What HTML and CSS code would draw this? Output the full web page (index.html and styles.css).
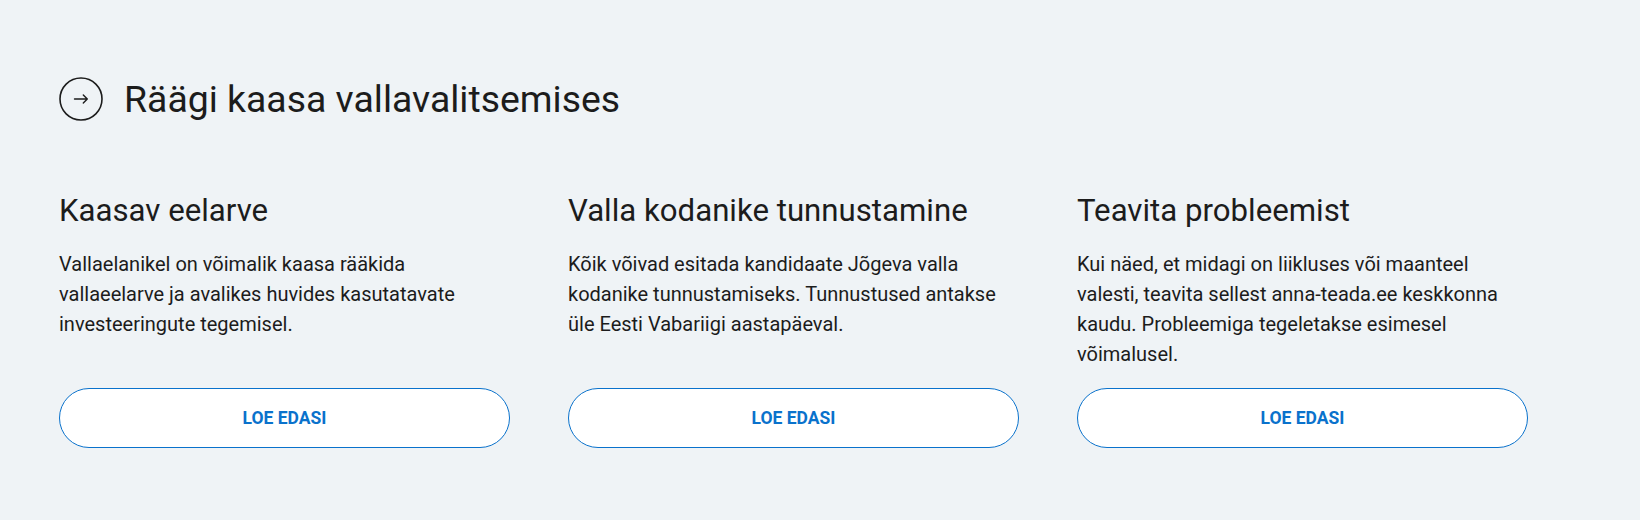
FILE: index.html
```html
<!DOCTYPE html>
<html lang="et">
<head>
<meta charset="utf-8">
<title>Räägi kaasa vallavalitsemises</title>
<link rel="stylesheet" href="styles.css">
</head>
<body>
<section class="involve">
  <header class="involve-head">
    <span class="head-icon">
      <svg width="44" height="44" viewBox="0 0 44 44" aria-hidden="true">
        <circle cx="22" cy="22" r="21" fill="none" stroke="#1c1c1c" stroke-width="1.6"/>
        <path d="M15.5 22 H28.3 M24.3 18 L28.3 22 L24.3 26" fill="none" stroke="#1c1c1c" stroke-width="1.4" stroke-linecap="round" stroke-linejoin="round"/>
      </svg>
    </span>
    <h2 class="head-title">Räägi kaasa vallavalitsemises</h2>
  </header>
  <div class="cards">
    <article class="card">
      <h3 class="card-title">Kaasav eelarve</h3>
      <p class="card-text">Vallaelanikel on võimalik kaasa rääkida vallaeelarve ja avalikes huvides kasutatavate investeeringute tegemisel.</p>
      <a class="card-btn" href="#">Loe edasi</a>
    </article>
    <article class="card">
      <h3 class="card-title">Valla kodanike tunnustamine</h3>
      <p class="card-text">Kõik võivad esitada kandidaate Jõgeva valla kodanike tunnustamiseks. Tunnustused antakse üle Eesti Vabariigi aastapäeval.</p>
      <a class="card-btn" href="#">Loe edasi</a>
    </article>
    <article class="card">
      <h3 class="card-title">Teavita probleemist</h3>
      <p class="card-text">Kui näed, et midagi on liikluses või maanteel valesti, teavita sellest anna-teada.ee keskkonna kaudu. Probleemiga tegeletakse esimesel võimalusel.</p>
      <a class="card-btn" href="#">Loe edasi</a>
    </article>
  </div>
</section>
</body>
</html>
```

FILE: styles.css
```css
html, body {
  margin: 0;
  padding: 0;
}
body {
  background: #eff3f6;
  font-family: Roboto, "Liberation Sans", Arial, sans-serif;
  color: #1c1c1c;
  width: 1640px;
  height: 520px;
  overflow: hidden;
}
.involve {
  padding: 77px 0 0 59px;
}
.involve-head {
  display: flex;
  align-items: center;
  gap: 21px;
  height: 44px;
}
.head-icon {
  display: flex;
  width: 44px;
  height: 44px;
}
.head-title {
  margin: 0;
  font-size: 37.4px;
  font-weight: 400;
  line-height: 44px;
  letter-spacing: 0;
}
.cards {
  display: grid;
  grid-template-columns: 451px 451px 451px;
  column-gap: 58px;
  margin-top: 71px;
}
.card {
  display: flex;
  flex-direction: column;
}
.card-title {
  margin: 0 0 20px;
  font-size: 31.2px;
  font-weight: 400;
  line-height: 37px;
}
.card-text {
  margin: 0 0 19px;
  font-size: 20px;
  line-height: 30px;
}
.card-btn {
  margin-top: auto;
  display: flex;
  align-items: center;
  justify-content: center;
  height: 58px;
  border: 1px solid #0a72cc;
  border-radius: 30px;
  background: #ffffff;
  color: #0a72cc;
  font-size: 17.5px;
  font-weight: 700;
  text-transform: uppercase;
  text-decoration: none;
}
```
